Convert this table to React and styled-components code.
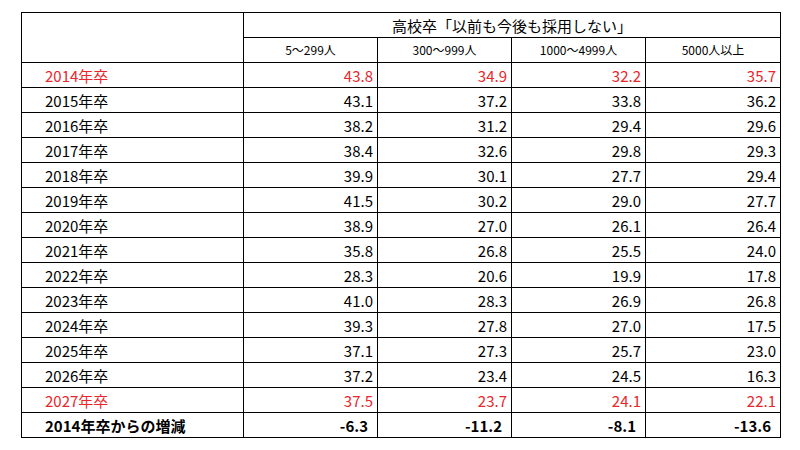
import React from 'react';
import styled, { createGlobalStyle } from 'styled-components';

const GlobalStyle = createGlobalStyle`
  html, body {
    margin: 0;
    padding: 0;
    background: #fff;
  }
  body {
    font-family: "Noto Sans CJK JP", "Noto Sans", sans-serif;
    color: #000;
  }
`;

const Page = styled.div`
  width: 800px;
  height: 450px;
  padding: 12px 0 0 21px;
  box-sizing: border-box;
`;

const Table = styled.table`
  border-collapse: collapse;
  table-layout: fixed;
  width: 759px;
`;

const Col = styled.col`
  width: ${p => p.$w}px;
`;

const Cell = styled.td`
  border: 1px solid #000;
  height: 25px;
  padding: 0;
  box-sizing: border-box;
  font-size: 15px;
  line-height: 1;
  white-space: nowrap;
  color: ${p => (p.$red ? '#e8262b' : '#000')};
  font-weight: ${p => (p.$bold ? 700 : 400)};
`;

const Label = styled(Cell)`
  text-align: left;
  padding-left: 23px;
`;

const Num = styled(Cell)`
  text-align: right;
  padding-right: ${p => (p.$bold ? '9px' : '4px')};
`;

const Title = styled(Cell)`
  text-align: center;
  font-size: 15px;
`;

const SubHead = styled(Cell)`
  text-align: center;
  font-size: 12px;
`;

const widths = [222, 134, 134, 134, 135];

const columns = ['5〜299人', '300〜999人', '1000〜4999人', '5000人以上'];

const rows = [
  ['2014年卒', ['43.8', '34.9', '32.2', '35.7'], true],
  ['2015年卒', ['43.1', '37.2', '33.8', '36.2']],
  ['2016年卒', ['38.2', '31.2', '29.4', '29.6']],
  ['2017年卒', ['38.4', '32.6', '29.8', '29.3']],
  ['2018年卒', ['39.9', '30.1', '27.7', '29.4']],
  ['2019年卒', ['41.5', '30.2', '29.0', '27.7']],
  ['2020年卒', ['38.9', '27.0', '26.1', '26.4']],
  ['2021年卒', ['35.8', '26.8', '25.5', '24.0']],
  ['2022年卒', ['28.3', '20.6', '19.9', '17.8']],
  ['2023年卒', ['41.0', '28.3', '26.9', '26.8']],
  ['2024年卒', ['39.3', '27.8', '27.0', '17.5']],
  ['2025年卒', ['37.1', '27.3', '25.7', '23.0']],
  ['2026年卒', ['37.2', '23.4', '24.5', '16.3']],
  ['2027年卒', ['37.5', '23.7', '24.1', '22.1'], true],
];

const diff = ['-6.3', '-11.2', '-8.1', '-13.6'];

export default function App() {
  return (
    <Page>
      <GlobalStyle />
      <Table>
        <colgroup>
          {widths.map((w, i) => (
            <Col key={i} $w={w} />
          ))}
        </colgroup>
        <tbody>
          <tr>
            <Label rowSpan={2} />
            <Title colSpan={4}>高校卒「以前も今後も採用しない」</Title>
          </tr>
          <tr>
            {columns.map(c => (
              <SubHead key={c}>{c}</SubHead>
            ))}
          </tr>
          {rows.map(([year, vals, red]) => (
            <tr key={year}>
              <Label $red={red}>{year}</Label>
              {vals.map((v, i) => (
                <Num key={i} $red={red}>{v}</Num>
              ))}
            </tr>
          ))}
          <tr>
            <Label $bold>2014年卒からの増減</Label>
            {diff.map((v, i) => (
              <Num key={i} $bold>{v}</Num>
            ))}
          </tr>
        </tbody>
      </Table>
    </Page>
  );
}
